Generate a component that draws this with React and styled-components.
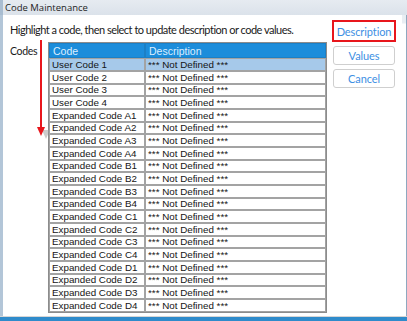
import React from "react";
import styled, { createGlobalStyle } from "styled-components";

const Global = createGlobalStyle`
  html, body { margin: 0; padding: 0; background: #fff; }
  body { width: 407px; height: 321px; overflow: hidden; font-family: "Lato", "Open Sans", sans-serif; }
`;

const Window = styled.div`
  width: 407px;
  height: 321px;
  display: flex;
  flex-direction: column;
  background: #fff;
`;

const TitleBar = styled.div`
  height: 15px;
  display: flex;
  align-items: center;
  background: linear-gradient(#e6ebf1, #dbe2ea);
  border-left: 3px solid #a9bdd1;
  box-sizing: border-box;
  font-family: "Open Sans", sans-serif;
  font-size: 9.5px;
  color: #1e1e1e;
  padding-left: 2px;
`;

const Middle = styled.div`
  flex: 1;
  display: flex;
  min-height: 0;
`;

const LeftEdge = styled.div`
  width: 3px;
  background: #b3c6d8;
`;

const RightEdge = styled.div`
  width: 5px;
  background: linear-gradient(#e9eef3 0px, #e9eef3 8px, #ffffff 9px, #ffffff 100%);
  border-right: 1px solid #8ea8c0;
  box-sizing: border-box;
`;

const BottomEdge = styled.div`
  height: 4px;
  border-top: 1px solid #d6d6d6;
  background: #2f8bcb;
`;

const Content = styled.div`
  flex: 1;
  display: flex;
  position: relative;
  background: #fff;
`;

const Main = styled.div`
  flex: 1;
  display: flex;
  flex-direction: column;
  padding: 8px 0 0 7px;
`;

const Instruction = styled.div`
  font-size: 11px;
  line-height: 14px;
  letter-spacing: -0.5px;
  white-space: nowrap;
  color: #1a1a1a;
  height: 19px;
`;

const CodesRow = styled.div`
  display: flex;
  align-items: flex-start;
`;

const CodesLabel = styled.div`
  width: 38px;
  font-size: 10.5px;
  line-height: 14px;
  letter-spacing: -0.3px;
  color: #1a1a1a;
  padding-top: 2px;
`;

const Table = styled.table`
  width: 279px;
  border-collapse: separate;
  border-spacing: 0;
  border: 1px solid #8c8c8c;
  font-family: "Liberation Sans", Arial, sans-serif;
  font-size: 9.8px;
  table-layout: fixed;
`;

const HeadCell = styled.th`
  height: 13px;
  padding: 0 0 0 3px;
  text-align: left;
  font-weight: normal;
  background: #1c8ddb;
  color: #dcefff;
  border: 1px solid #1b80c6;
  line-height: 12px;
  font-size: 10.5px;
`;

const Cell = styled.td`
  height: ${p => p.$h}px;
  padding: 0 0 0 2px;
  border: 1px solid #a3a3a3;
  background: ${p => (p.$selected ? "#a6c9ea" : "#fff")};
  color: #141414;
  line-height: 10px;
  white-space: nowrap;
  overflow: hidden;
  box-sizing: border-box;
`;

const Buttons = styled.div`
  width: 64px;
  display: flex;
  flex-direction: column;
  gap: 4px;
  margin: 5px 6px 0 0;
`;

const Button = styled.button`
  height: ${p => (p.$flagged ? 22 : 19)}px;
  margin: ${p => (p.$flagged ? "0" : "0 1px")};
  padding: 0;
  background: #fff;
  border: ${p => (p.$flagged ? "2px solid #e8161c" : "1px solid #cfcfcf")};
  border-radius: ${p => (p.$flagged ? 0 : 3)}px;
  color: #3d8fe3;
  font-family: "Lato", "Open Sans", sans-serif;
  font-size: 11px;
  letter-spacing: -0.1px;
`;

const Arrow = styled.svg`
  position: absolute;
  left: 33px;
  top: 24px;
`;

const rows = [
  "User Code 1", "User Code 2", "User Code 3", "User Code 4",
  ...["A", "B", "C", "D"].flatMap(l => [1, 2, 3, 4].map(n => `Expanded Code ${l}${n}`)),
];

export default function App() {
  return (
    <>
      <Global />
      <Window>
        <TitleBar>Code Maintenance</TitleBar>
        <Middle>
          <LeftEdge />
          <Content>
            <Main>
              <Instruction>Highlight a code, then select to update description or code values.</Instruction>
              <CodesRow>
                <CodesLabel>Codes</CodesLabel>
                <Table>
                  <colgroup>
                    <col style={{ width: "96px" }} />
                    <col />
                  </colgroup>
                  <thead>
                    <tr>
                      <HeadCell>Code</HeadCell>
                      <HeadCell>Description</HeadCell>
                    </tr>
                  </thead>
                  <tbody>
                    {rows.map((r, i) => {
                      const h = i % 3 === 2 ? 12 : 13;
                      return (
                        <tr key={r}>
                          <Cell $h={h} $selected={i === 0}>{r}</Cell>
                          <Cell $h={h} $selected={i === 0}>*** Not Defined ***</Cell>
                        </tr>
                      );
                    })}
                  </tbody>
                </Table>
              </CodesRow>
            </Main>
            <Buttons>
              <Button $flagged>Description</Button>
              <Button>Values</Button>
              <Button>Cancel</Button>
            </Buttons>
            <Arrow width="16" height="100" viewBox="0 0 16 100">
              <polygon points="6,91 14,91 10,100" fill="#9a9a9a" opacity="0.5" />
              <rect x="4" y="1" width="2" height="89" fill="#e8161c" />
              <polygon points="1,88 9,88 5,97" fill="#e8161c" />
            </Arrow>
          </Content>
          <RightEdge />
        </Middle>
        <BottomEdge />
      </Window>
    </>
  );
}
